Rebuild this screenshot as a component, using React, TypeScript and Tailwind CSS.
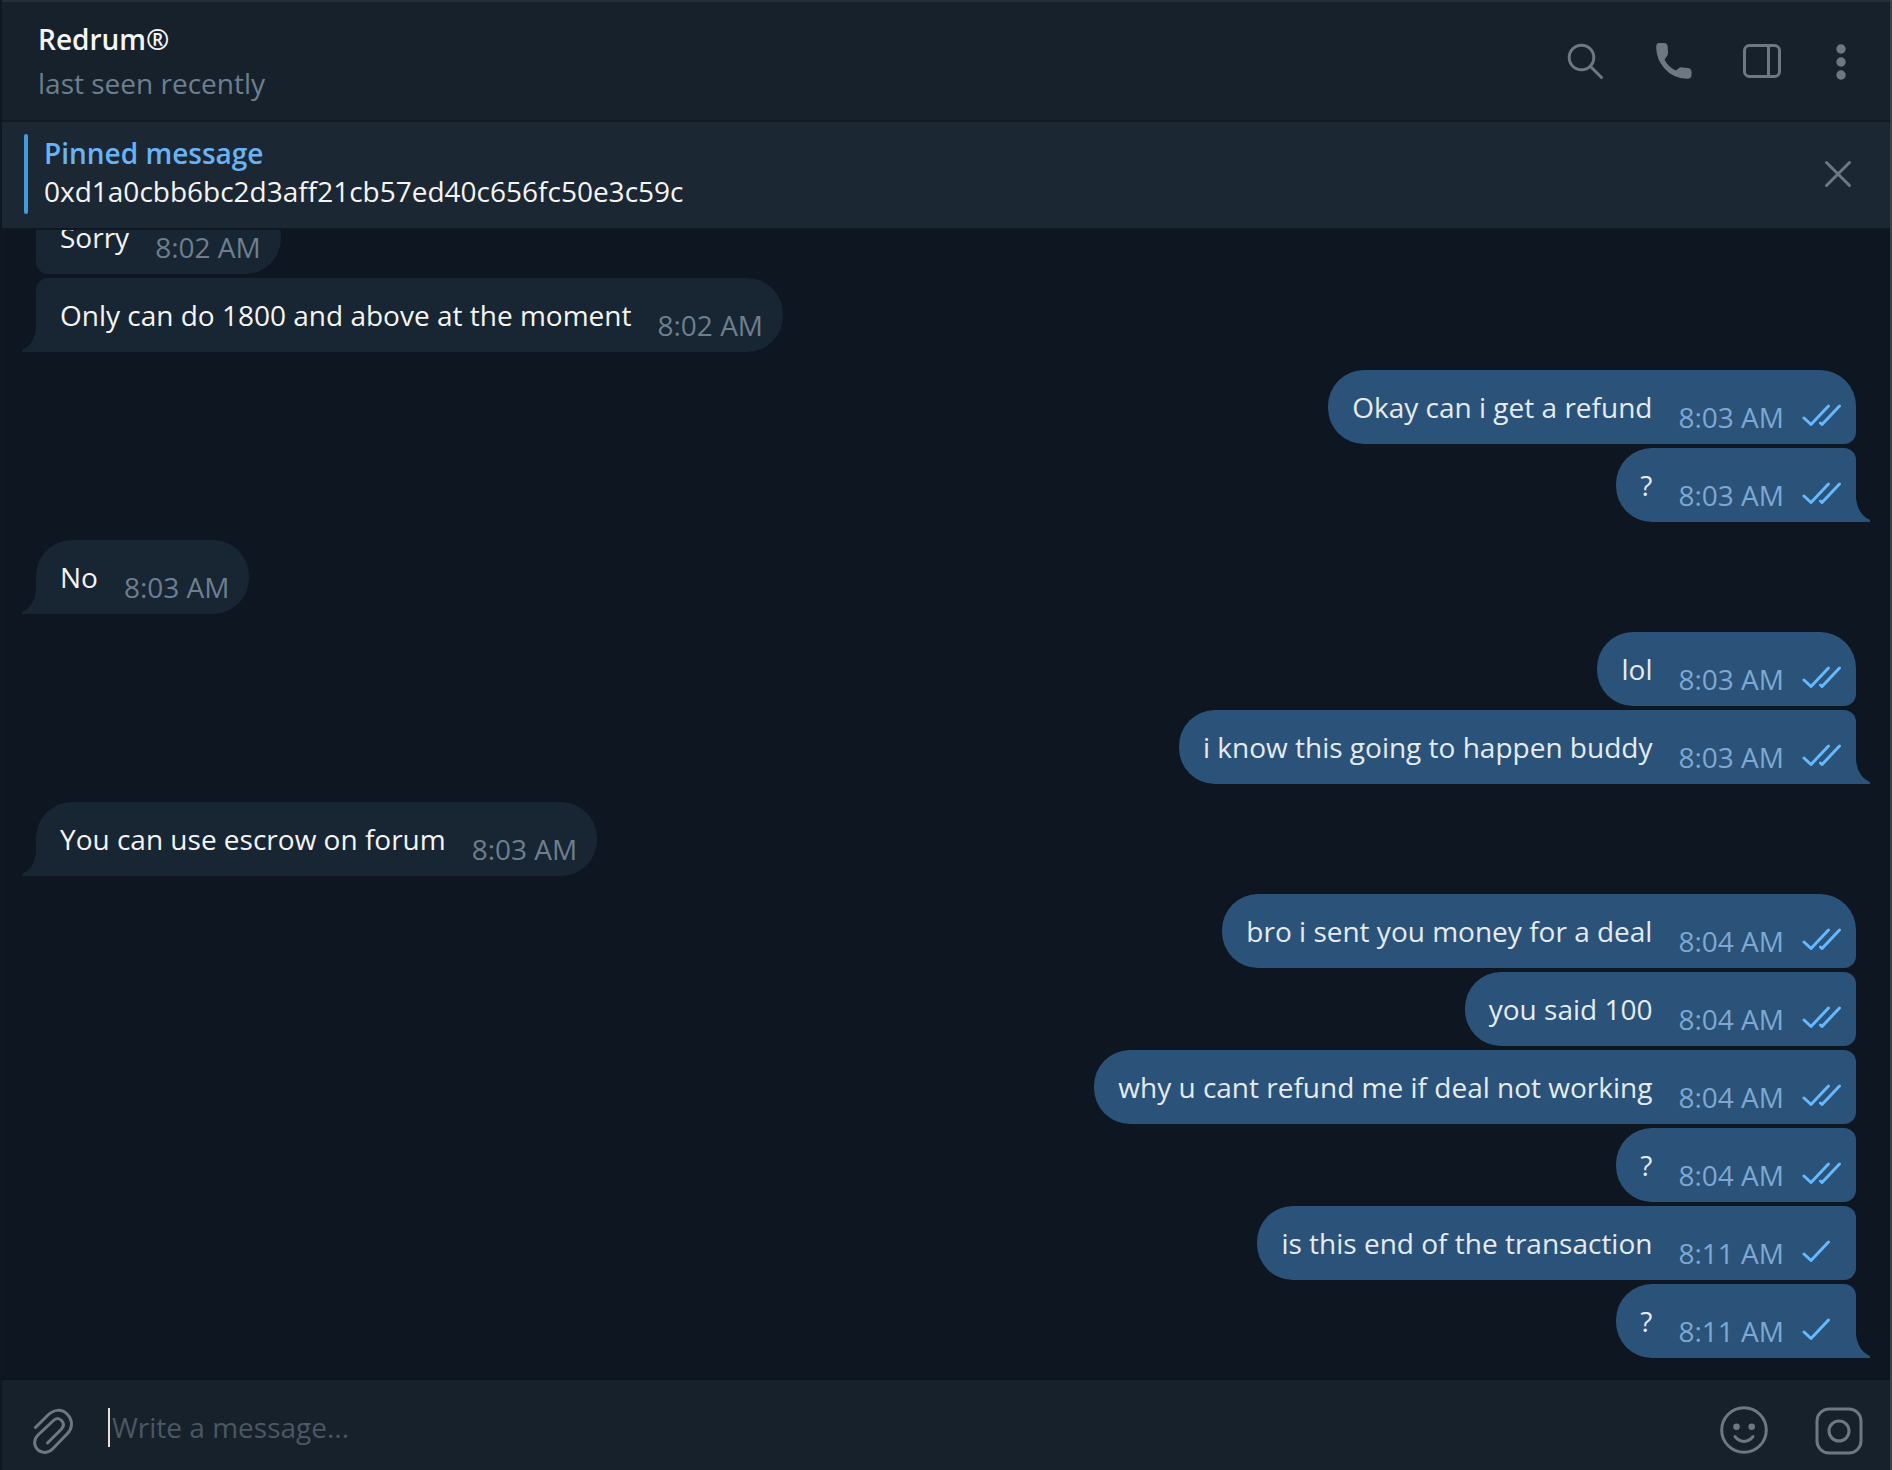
import React from 'react';

interface Message {
  id: number;
  text: string;
  time: string;
  read?: boolean;
}

interface MessageGroup {
  own: boolean;
  // Set when earlier messages of the group are above the visible history
  continued?: boolean;
  messages: Message[];
}

const groups: MessageGroup[] = [
  {
    own: false,
    continued: true,
    messages: [
      { id: 1, text: 'Sorry', time: '8:02 AM' },
      { id: 2, text: 'Only can do 1800 and above at the moment', time: '8:02 AM' }
    ]
  },
  {
    own: true,
    messages: [
      { id: 3, text: 'Okay can i get a refund', time: '8:03 AM', read: true },
      { id: 4, text: '?', time: '8:03 AM', read: true }
    ]
  },
  {
    own: false,
    messages: [{ id: 5, text: 'No', time: '8:03 AM' }]
  },
  {
    own: true,
    messages: [
      { id: 6, text: 'lol', time: '8:03 AM', read: true },
      { id: 7, text: 'i know this going to happen buddy', time: '8:03 AM', read: true }
    ]
  },
  {
    own: false,
    messages: [{ id: 8, text: 'You can use escrow on forum', time: '8:03 AM' }]
  },
  {
    own: true,
    messages: [
      { id: 9, text: 'bro i sent you money for a deal', time: '8:04 AM', read: true },
      { id: 10, text: 'you said 100', time: '8:04 AM', read: true },
      { id: 11, text: 'why u cant refund me if deal not working', time: '8:04 AM', read: true },
      { id: 12, text: '?', time: '8:04 AM', read: true },
      { id: 13, text: 'is this end of the transaction', time: '8:11 AM', read: false },
      { id: 14, text: '?', time: '8:11 AM', read: false }
    ]
  }
];

const Ticks = ({ read }: { read?: boolean }) => (
  <svg
    className="w-10 h-6 shrink-0"
    viewBox="0 0 40 24"
    fill="none"
    stroke="#64b9ff"
    strokeWidth={3}
    strokeLinecap="round"
    strokeLinejoin="round"
  >
    <path d="M2 14L9 20.500L26.500 2" />
    {read && <path d="M18.500 19L20 20.500L37.500 2" />}
  </svg>
);

const Tail = ({ own }: { own: boolean }) => (
  <svg
    className={`absolute bottom-0 w-[14px] h-6 ${own ? 'left-full' : 'right-full -scale-x-100'}`}
    viewBox="0 0 14 24"
    fill={own ? '#2b5278' : '#182533'}
  >
    <path d="M0 0C1 10 5 18 14 22V24H0Z" />
  </svg>
);

const Bubble = ({ message, own, first, last }: { message: Message; own: boolean; first: boolean; last: boolean }) => {
  // The side facing the edge of the window is squared off inside a group
  const corners = own
    ? `rounded-l-[36px] ${first ? 'rounded-tr-[36px]' : 'rounded-tr-xl'} ${last ? '' : 'rounded-br-xl'}`
    : `rounded-r-[36px] ${first ? 'rounded-tl-[36px]' : 'rounded-tl-xl'} ${last ? '' : 'rounded-bl-xl'}`;

  return (
    <li
      className={`relative flex h-[74px] shrink-0 pl-6 ${corners} ${own ? 'bg-[#2b5278] pr-[14px]' : 'bg-[#182533] pr-5'}`}
    >
      <p className={`pt-[18px] ${own ? 'text-[#e4ecf2]' : 'text-[#f5f5f5]'}`}>{message.text}</p>
      <time className={`pt-7 ml-[26px] ${own ? 'text-[#7da8d3]' : 'text-[#6d7f8f]'}`}>{message.time}</time>
      {own && (
        <span className="pt-[34px] ml-[18px]">
          <Ticks read={message.read} />
        </span>
      )}
      {last && <Tail own={own} />}
    </li>
  );
};

export default function App() {
  return (
    <div className="flex flex-col h-screen overflow-hidden bg-[#0e1621] border-l-2 border-l-[#0f1820] border-r-2 border-r-[#39434c] font-['Open_Sans',sans-serif] text-[28px] leading-[38px] whitespace-nowrap">
      {/* Chat header */}
      <header className="flex justify-between shrink-0 h-[122px] pl-9 pr-9 bg-[#17212b] border-t-2 border-t-[#242f3b] border-b-2 border-b-[#121b24]">
        <div className="flex flex-col gap-[6px] pt-[18px]">
          <h1 className="font-semibold text-[#f5f5f5]">Redrum®</h1>
          <p className="text-[#6d7f8f]">last seen recently</p>
        </div>
        <div className="flex items-start gap-12 pt-10 text-[#6c7883]">
          <button aria-label="Search">
            <svg className="w-10 h-10" viewBox="0 0 40 40" fill="none" stroke="currentColor" strokeWidth={3} strokeLinecap="round">
              <circle cx="15.5" cy="15.5" r="12.3" />
              <path d="M24.5 24.5L35.5 35.5" />
            </svg>
          </button>
          <button aria-label="Call">
            <svg className="w-10 h-10" viewBox="0 0 40 40" fill="currentColor">
              <path d="M5 1H10Q13.500 1 13.700 5L14 11Q14 13.500 12 15.500L10.500 17.500Q14 25 22 28.500L24.500 26.500Q26 25.200 28.500 25.400L34 26Q37.500 26.500 37.500 30V33Q37.500 37 33 36.800Q19 36.500 10 26Q2.500 17 2.200 6Q2 1 5 1Z" />
            </svg>
          </button>
          <button aria-label="Toggle info panel">
            <svg className="w-10 h-10" viewBox="0 0 40 40" fill="none" stroke="currentColor" strokeWidth={3}>
              <rect x="2.500" y="3.500" width="35" height="31" rx="5" />
              <path d="M26.500 4V34" />
            </svg>
          </button>
          <button aria-label="More">
            <svg className="w-6 h-10" viewBox="0 0 24 40" fill="currentColor">
              <circle cx="11" cy="7" r="4.700" />
              <circle cx="11" cy="20" r="4.700" />
              <circle cx="11" cy="33" r="4.700" />
            </svg>
          </button>
        </div>
      </header>

      {/* Pinned message */}
      <section className="flex items-start justify-between shrink-0 h-[108px] pt-3 pl-[22px] pr-9 bg-[#1c2734] border-b-2 border-[#101922]">
        <div className="flex gap-4">
          <div className="w-1 h-20 rounded-full bg-[#429bdb]"></div>
          <div>
            <h2 className="font-semibold text-[#6ab3f3]">Pinned message</h2>
            <p className="text-[#f5f5f5]">0xd1a0cbb6bc2d3aff21cb57ed40c656fc50e3c59c</p>
          </div>
        </div>
        <button aria-label="Unpin message" className="pt-6 text-[#6c7883]">
          <svg className="w-8 h-8" viewBox="0 0 32 32" fill="none" stroke="currentColor" strokeWidth={3} strokeLinecap="round">
            <path d="M4.500 4.500L27.500 27.500M27.500 4.500L4.500 27.500" />
          </svg>
        </button>
      </section>

      {/* Message history, stuck to the bottom */}
      <main className="flex flex-col flex-1 justify-end gap-[18px] min-h-0 overflow-hidden px-[34px] pb-5">
        {groups.map((group, index) => (
          <ul key={index} className={`flex flex-col shrink-0 gap-1 ${group.own ? 'items-end' : 'items-start'}`}>
            {group.messages.map((message, i) => (
              <Bubble
                key={message.id}
                message={message}
                own={group.own}
                first={i === 0 && !group.continued}
                last={i === group.messages.length - 1}
              />
            ))}
          </ul>
        ))}
      </main>

      {/* Composer */}
      <footer className="flex items-start shrink-0 h-[92px] pl-[26px] pr-6 pt-6 bg-[#17212b] border-t-2 border-[#0b131b] text-[#6c7883]">
        <button aria-label="Attach file">
          <svg className="w-12 h-[52px]" viewBox="0 0 48 52" fill="none" stroke="currentColor" strokeWidth={3} strokeLinecap="round">
            <path d="M7.500 23.500L20 11C26 5 34 5 39 10C45 16 45 24 39 30L24.500 45C20 49.500 14 49.500 10 46C5.500 41.500 5.500 35.500 10 31L25.500 16.500C28 14 31 14 33.500 16.500C36 19 36 22 33.500 25L19.500 39" />
          </svg>
        </button>
        <div className="flex flex-1 ml-8 pt-1">
          <span className="w-[2px] h-[39px] bg-[#e9dfd5]"></span>
          <input
            type="text"
            aria-label="Message"
            placeholder="Write a message..."
            className="flex-1 h-[38px] ml-[2px] bg-transparent outline-none text-[#f5f5f5] placeholder:text-[#4b5763]"
          />
        </div>
        <div className="flex gap-11">
          <button aria-label="Emoji">
            <svg className="w-[52px] h-[52px]" viewBox="0 0 52 52" fill="none" stroke="currentColor" strokeWidth={3} strokeLinecap="round">
              <circle cx="26" cy="26" r="22.300" />
              <circle cx="18.500" cy="22.700" r="3.300" fill="currentColor" stroke="none" />
              <circle cx="33.700" cy="22.700" r="3.300" fill="currentColor" stroke="none" />
              <path d="M17 32.500C22 39 30 39 35 32.500" />
            </svg>
          </button>
          <button aria-label="Record video message">
            <svg className="w-[52px] h-[52px]" viewBox="0 0 52 52" fill="none" stroke="currentColor" strokeWidth={3}>
              <rect x="3" y="5" width="44" height="44" rx="12" />
              <circle cx="25" cy="27" r="10" />
            </svg>
          </button>
        </div>
      </footer>
    </div>
  );
}
